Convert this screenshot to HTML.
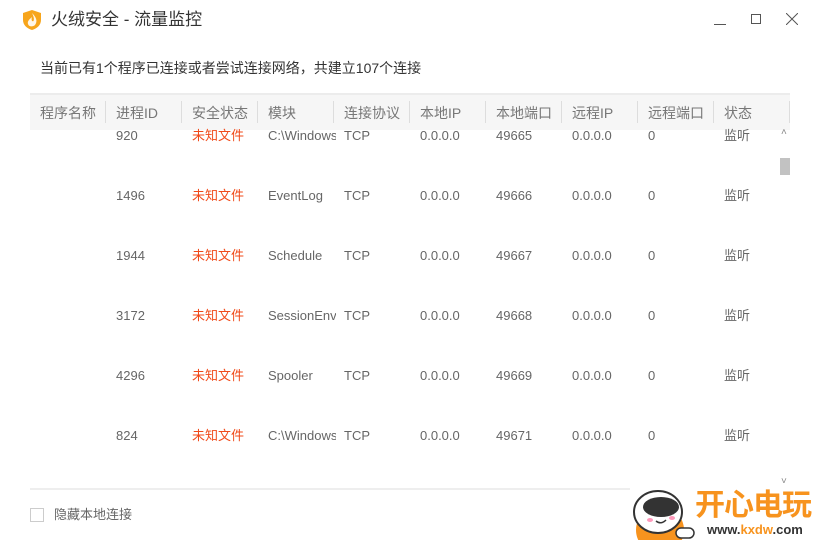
<!DOCTYPE html>
<html><head><meta charset="utf-8"><style>
*{margin:0;padding:0;box-sizing:border-box}
body{width:820px;height:540px;background:#fff;position:relative;overflow:hidden;font-family:"Liberation Sans","Noto Sans CJK SC",sans-serif;color:#666}
.a{position:absolute;white-space:nowrap}
.t{font-size:13px;line-height:16px}
.hd{position:absolute;left:30px;top:93px;width:760px;height:37px;background:#f6f6f6;border-top:2px solid #ececec}
.sep{position:absolute;top:101px;width:1px;height:22px;background:#ddd}
.red{color:#f04a1a}
</style></head><body>
<svg class="a" style="left:22px;top:9px" width="20" height="22" viewBox="0 0 20 22"><path d="M10 1 L19 4 V11 C19 16 15 19.5 10 21 C5 19.5 1 16 1 11 V4 Z" fill="#f7a51c"/><path d="M10 4 C14 8 16 12 13 16 C11 18 7 18 6 15 C5 12 8 10 10 8 C9 11 10 13 11.5 12 C12.5 10 11.5 7 10 4Z" fill="#fff" opacity=".9"/></svg>
<div class="a" style="left:51px;top:10px;font-size:17px;color:#333;line-height:20px">火绒安全 - 流量监控</div>
<div class="a" style="left:714px;top:24px;width:12px;height:1px;background:#555"></div>
<div class="a" style="left:751px;top:14px;width:10px;height:10px;border:1px solid #555"></div>
<svg class="a" style="left:786px;top:13px" width="12" height="12"><path d="M0 0L12 12M12 0L0 12" stroke="#555" stroke-width="1"/></svg>
<div class="a" style="left:40px;top:59px;font-size:14px;color:#333;line-height:18px">当前已有1个程序已连接或者尝试连接网络，共建立107个连接</div>
<div class="hd"></div>
<div class="a t" style="left:40px;top:105px;font-size:14px;color:#777">程序名称</div>
<div class="a t" style="left:116px;top:105px;font-size:14px;color:#777">进程ID</div>
<div class="a t" style="left:192px;top:105px;font-size:14px;color:#777">安全状态</div>
<div class="a t" style="left:268px;top:105px;font-size:14px;color:#777">模块</div>
<div class="a t" style="left:344px;top:105px;font-size:14px;color:#777">连接协议</div>
<div class="a t" style="left:420px;top:105px;font-size:14px;color:#777">本地IP</div>
<div class="a t" style="left:496px;top:105px;font-size:14px;color:#777">本地端口</div>
<div class="a t" style="left:572px;top:105px;font-size:14px;color:#777">远程IP</div>
<div class="a t" style="left:648px;top:105px;font-size:14px;color:#777">远程端口</div>
<div class="a t" style="left:724px;top:105px;font-size:14px;color:#777">状态</div>
<div class="sep" style="left:105px"></div><div class="sep" style="left:181px"></div><div class="sep" style="left:257px"></div><div class="sep" style="left:333px"></div><div class="sep" style="left:409px"></div><div class="sep" style="left:485px"></div><div class="sep" style="left:561px"></div><div class="sep" style="left:637px"></div><div class="sep" style="left:713px"></div><div class="sep" style="left:789px"></div>
<div id="rows"></div>
<script>
var d=[["920","C:\\Windows","49665"],["1496","EventLog","49666"],["1944","Schedule","49667"],["3172","SessionEnv","49668"],["4296","Spooler","49669"],["824","C:\\Windows","49671"]];
var h="";d.forEach(function(r,i){var y=128+i*60;
h+='<div class="a t" style="left:116px;top:'+y+'px">'+r[0]+'</div>';
h+='<div class="a t red" style="left:192px;top:'+y+'px">未知文件</div>';
h+='<div class="a t" style="left:268px;top:'+y+'px;width:68px;overflow:hidden">'+r[1]+'</div>';
h+='<div class="a t" style="left:344px;top:'+y+'px">TCP</div>';
h+='<div class="a t" style="left:420px;top:'+y+'px">0.0.0.0</div>';
h+='<div class="a t" style="left:496px;top:'+y+'px">'+r[2]+'</div>';
h+='<div class="a t" style="left:572px;top:'+y+'px">0.0.0.0</div>';
h+='<div class="a t" style="left:648px;top:'+y+'px">0</div>';
h+='<div class="a t" style="left:724px;top:'+y+'px">监听</div>';});
document.getElementById("rows").innerHTML=h;
</script>
<div class="a" style="left:781px;top:127px;font-size:10px;color:#888">˄</div>
<div class="a" style="left:780px;top:158px;width:10px;height:17px;background:#c2c2c2"></div>
<div class="a" style="left:781px;top:476px;font-size:10px;color:#888">˅</div>
<div class="a" style="left:30px;top:488px;width:600px;height:2px;background:#eee"></div>
<div class="a" style="left:30px;top:508px;width:14px;height:14px;border:1px solid #ccc"></div>
<div class="a" style="left:54px;top:507px;font-size:13px;color:#666;line-height:16px">隐藏本地连接</div>
<svg class="a" style="left:630px;top:488px" width="68" height="52" viewBox="0 0 68 52"><circle cx="30" cy="42" r="24" fill="#f7931e"/><ellipse cx="28" cy="24" rx="24" ry="21" fill="#fff" stroke="#333" stroke-width="2"/><ellipse cx="31" cy="19" rx="18" ry="10" fill="#333"/><ellipse cx="20" cy="32" rx="3" ry="2" fill="#f9b"/><ellipse cx="42" cy="30" rx="3" ry="2" fill="#f9b"/><path d="M26 33 Q31 37 36 32" stroke="#333" stroke-width="1.5" fill="none"/><rect x="46" y="40" width="18" height="10" rx="5" fill="#fff" stroke="#333" stroke-width="1.5"/></svg>
<div class="a" style="left:695px;top:490px;font-size:30px;font-weight:bold;color:#f7931e;line-height:32px;letter-spacing:-1px">开心电玩</div>
<div class="a" style="left:707px;top:523px;font-size:13px;font-weight:bold;color:#333;line-height:14px">www.<span style="color:#f7931e">kxdw</span>.com</div>
</body></html>
